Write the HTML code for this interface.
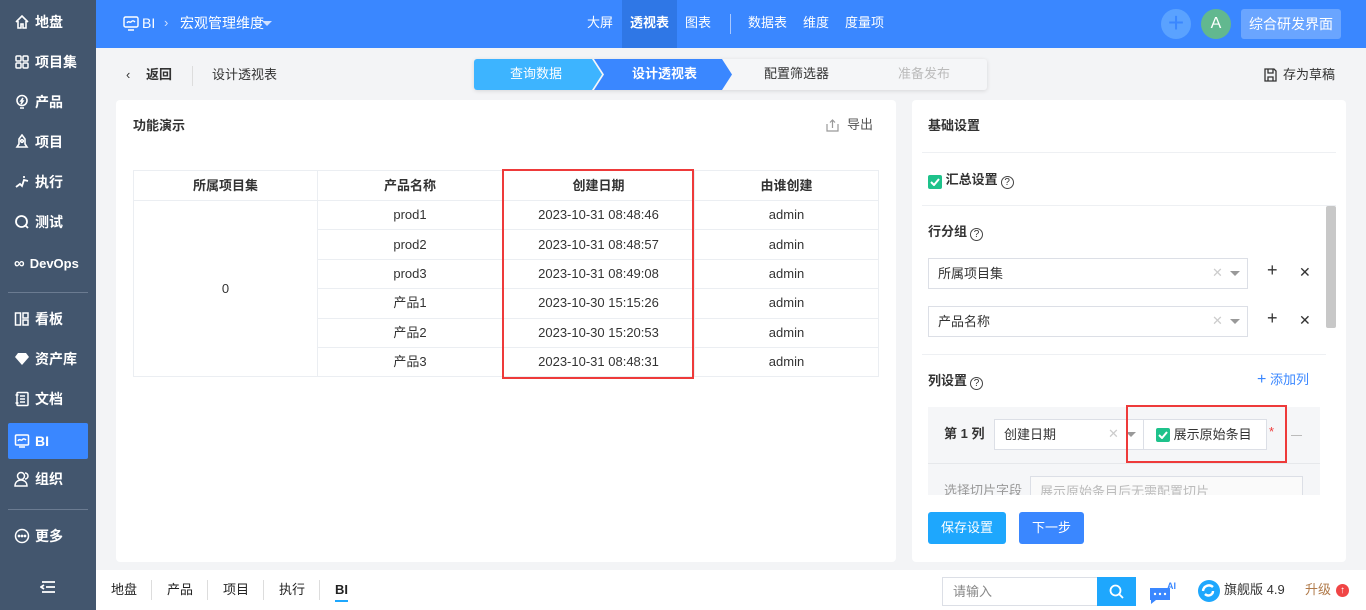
<!DOCTYPE html>
<html><head><meta charset="utf-8"><style>
*{margin:0;padding:0;box-sizing:border-box}
body{width:1366px;height:610px;overflow:hidden;background:#f3f4f6;font-family:"Liberation Sans","Noto Sans CJK SC",sans-serif;font-size:13px;color:#333;position:relative;line-height:16px}
.abs{position:absolute}
.side{left:0;top:0;width:96px;height:610px;background:#43566e;color:#fff}
.si{position:absolute;left:8px;width:80px;height:36px;display:flex;align-items:center;padding-left:6px;font-size:14px;font-weight:bold;gap:5px}
.si svg{width:16px;height:16px;flex:none}
.hdr{left:96px;top:0;width:1270px;height:48px;background:#3a87ff;color:#fff}
.card{background:#fff;border-radius:4px}
table{border-collapse:collapse;position:absolute;left:133px;top:170px;width:746px;font-size:13px}
td,th{border:1px solid #ebeef2;text-align:center;height:29.4px;color:#333}
th{font-weight:bold;height:30px}
.sel{position:absolute;border:1px solid #dcdfe6;background:#fff;height:31px;display:flex;align-items:center;padding-left:9px;font-size:13px}
.x{position:absolute;color:#ccc;font-size:13px}
.tri{position:absolute;width:0;height:0;border-left:5px solid transparent;border-right:5px solid transparent;border-top:5px solid #999}
.chk{width:14px;height:14px;background:#1ec28b;border-radius:2px;display:inline-flex;align-items:center;justify-content:center;vertical-align:-2px}
.q{display:inline-block;width:13px;height:13px;border:1.3px solid #444;border-radius:50%;font-size:10px;line-height:11px;text-align:center;font-weight:normal;vertical-align:-1px;margin-left:3px}
.btn{position:absolute;color:#fff;border-radius:3px;display:flex;align-items:center;justify-content:center;font-size:13px}
</style></head><body>
<div class="abs side">
 <div class="si" style="top:4px"><svg viewBox="0 0 16 16" fill="none" stroke="#fff" stroke-width="1.6"><path d="M2 8L8 2l6 6M4 7v7h3v-4h2v4h3V7"/></svg>地盘</div>
 <div class="si" style="top:44px"><svg viewBox="0 0 16 16" fill="none" stroke="#fff" stroke-width="1.5"><rect x="2" y="2" width="5" height="5" rx="1"/><rect x="9" y="2" width="5" height="5" rx="1"/><rect x="2" y="9" width="5" height="5" rx="1"/><rect x="9" y="9" width="5" height="5" rx="1"/></svg>项目集</div>
 <div class="si" style="top:84px"><svg viewBox="0 0 16 16" fill="none" stroke="#fff" stroke-width="1.6"><circle cx="8" cy="6.5" r="5"/><path d="M6 14h4M9 4L7 7h2l-2 3"/></svg>产品</div>
 <div class="si" style="top:124px"><svg viewBox="0 0 16 16" fill="none" stroke="#fff" stroke-width="1.6"><path d="M8 1l3 4v5l2 3H3l2-3V5z"/><circle cx="8" cy="7" r="1.3"/></svg>项目</div>
 <div class="si" style="top:164px"><svg viewBox="0 0 16 16" fill="none" stroke="#fff" stroke-width="1.8"><path d="M2 13l4-3 2 2 2-6 4 1M9 3h2"/></svg>执行</div>
 <div class="si" style="top:204px"><svg viewBox="0 0 16 16" fill="none" stroke="#fff" stroke-width="1.8"><circle cx="7.5" cy="7.5" r="5.5"/><path d="M11 11l3 3"/></svg>测试</div>
 <div class="si" style="top:246px;font-size:13px"><span style="font-size:15px">∞</span>DevOps</div>
 <div style="position:absolute;left:8px;top:292px;width:80px;border-top:1px solid #6b7b91"></div>
 <div class="si" style="top:301px"><svg viewBox="0 0 16 16" fill="none" stroke="#fff" stroke-width="1.5"><rect x="1.5" y="2" width="5" height="12"/><rect x="9" y="2" width="5" height="5"/><rect x="9" y="9" width="5" height="5"/></svg>看板</div>
 <div class="si" style="top:341px"><svg viewBox="0 0 16 16" fill="#fff"><path d="M4 2h8l3 4-7 8-7-8z"/></svg>资产库</div>
 <div class="si" style="top:381px"><svg viewBox="0 0 16 16" fill="none" stroke="#fff" stroke-width="1.5"><rect x="3" y="1.5" width="11" height="13" rx="1"/><path d="M6 5h5M6 8h5M6 11h5M1.5 4h3M1.5 12h3"/></svg>文档</div>
 <div class="si" style="top:423px;background:#3a87ff;border-radius:2px"><svg viewBox="0 0 16 16" fill="none" stroke="#fff" stroke-width="1.5"><rect x="1.5" y="2" width="13" height="10" rx="1"/><path d="M4 8c1.5-3 3 0 4-1s2-2 4 0M5 14h6"/></svg>BI</div>
 <div class="si" style="top:461px"><svg viewBox="0 0 16 16" fill="none" stroke="#fff" stroke-width="1.5"><circle cx="7" cy="5" r="3.5"/><path d="M1 15c0-4 3-6 6-6s6 2 6 6zM11 2a3 3 0 010 6"/></svg>组织</div>
 <div style="position:absolute;left:8px;top:509px;width:80px;border-top:1px solid #6b7b91"></div>
 <div class="si" style="top:518px"><svg viewBox="0 0 16 16" fill="none" stroke="#fff" stroke-width="1.5"><circle cx="8" cy="8" r="6.5"/><circle cx="5" cy="8" r=".6" fill="#fff"/><circle cx="8" cy="8" r=".6" fill="#fff"/><circle cx="11" cy="8" r=".6" fill="#fff"/></svg>更多</div>
 <svg class="abs" style="left:40px;top:580px" width="16" height="14" viewBox="0 0 16 14" fill="none" stroke="#fff" stroke-width="1.8"><path d="M2 2h13M6 7h9M2 12h13M4 5L1 7l3 2"/></svg>
</div>
<div class="abs hdr">
 <svg class="abs" style="left:27px;top:16px" width="16" height="15" viewBox="0 0 16 15" fill="none" stroke="#fff" stroke-width="1.4"><rect x="1" y="1" width="14" height="10" rx="1.5"/><path d="M4 7c1.5-3 3 0 4-1s2-2 4 0M5 14h6"/></svg>
 <span class="abs" style="left:46px;top:15px;font-size:14px">BI</span>
 <span class="abs" style="left:68px;top:15px;color:#cfe0ff">›</span>
 <span class="abs" style="left:84px;top:15px;font-size:14px">宏观管理维度</span>
 <div class="tri" style="left:166px;top:21px;border-top-color:#cfe0ff"></div>
 <div class="abs" style="left:526px;top:0;width:55px;height:48px;background:#2f77e6"></div>
 <span class="abs" style="left:491px;top:15px">大屏</span>
 <span class="abs" style="left:534px;top:15px;font-weight:bold">透视表</span>
 <span class="abs" style="left:589px;top:15px">图表</span>
 <div class="abs" style="left:634px;top:14px;height:20px;border-left:1px solid #a9c8ff"></div>
 <span class="abs" style="left:652px;top:15px">数据表</span>
 <span class="abs" style="left:707px;top:15px">维度</span>
 <span class="abs" style="left:749px;top:15px">度量项</span>
 <div class="abs" style="left:1065px;top:9px;width:30px;height:30px;border-radius:50%;background:#5aa2ff;color:#3a87ff;font-size:28px;line-height:28px;text-align:center">+</div>
 <div class="abs" style="left:1105px;top:9px;width:30px;height:30px;border-radius:50%;background:#62b88f;text-align:center;line-height:30px;font-size:16px">A</div>
 <div class="abs" style="left:1145px;top:9px;width:100px;height:30px;border-radius:3px;background:#6aa5ff;text-align:center;line-height:30px;font-size:14px">综合研发界面</div>
</div>
<span class="abs" style="left:126px;top:67px">‹</span>
<span class="abs" style="left:146px;top:67px;font-weight:bold">返回</span>
<div class="abs" style="left:192px;top:66px;height:20px;border-left:1px solid #ddd"></div>
<span class="abs" style="left:212px;top:67px">设计透视表</span>
<div class="abs" style="left:474px;top:59px;width:513px;height:31px;background:#f5f6f8;border-radius:3px;box-shadow:0 1px 4px rgba(0,0,0,.12)"></div>
<svg class="abs" style="left:474px;top:59px" width="260" height="31"><path d="M3 0H118l10 15.5L118 31H3a3 3 0 01-3-3V3a3 3 0 013-3z" fill="#3db4ff"/><path d="M120 0H248l10 15.5L248 31H120l10-15.5z" fill="#3a87ff"/></svg>
<span class="abs" style="left:510px;top:66px;color:#fff">查询数据</span>
<span class="abs" style="left:632px;top:66px;color:#fff;font-weight:bold">设计透视表</span>
<span class="abs" style="left:764px;top:66px">配置筛选器</span>
<span class="abs" style="left:898px;top:66px;color:#bbb">准备发布</span>
<svg class="abs" style="left:1264px;top:68px" width="13" height="14" viewBox="0 0 13 14" fill="none" stroke="#333" stroke-width="1.3"><path d="M1 1h9l2 2v10H1zM4 1v4h5V1M4 13V9h5v4"/></svg>
<span class="abs" style="left:1283px;top:67px">存为草稿</span>

<div class="abs card" style="left:116px;top:100px;width:780px;height:462px">
 <span class="abs" style="left:17px;top:18px;font-weight:bold">功能演示</span>
 <svg class="abs" style="left:710px;top:19px" width="13" height="13" viewBox="0 0 13 13" fill="none" stroke="#999" stroke-width="1.2"><path d="M1 5v7h11V5M6.5 1v8M4 3.5l2.5-2.5 2.5 2.5"/></svg>
 <span class="abs" style="left:731px;top:17px;color:#555">导出</span>
</div>
<table>
<tr><th style="width:184px">所属项目集</th><th style="width:185px">产品名称</th><th style="width:192px">创建日期</th><th>由谁创建</th></tr>
<tr><td rowspan="6">0</td><td>prod1</td><td>2023-10-31 08:48:46</td><td>admin</td></tr>
<tr><td>prod2</td><td>2023-10-31 08:48:57</td><td>admin</td></tr>
<tr><td>prod3</td><td>2023-10-31 08:49:08</td><td>admin</td></tr>
<tr><td>产品1</td><td>2023-10-30 15:15:26</td><td>admin</td></tr>
<tr><td>产品2</td><td>2023-10-30 15:20:53</td><td>admin</td></tr>
<tr><td>产品3</td><td>2023-10-31 08:48:31</td><td>admin</td></tr>
</table>
<div class="abs" style="left:502px;top:169px;width:192px;height:210px;border:2px solid #ee3a3a"></div>

<div class="abs card" style="left:912px;top:100px;width:434px;height:462px"></div>
<span class="abs" style="left:928px;top:118px;font-weight:bold">基础设置</span>
<div class="abs" style="left:922px;top:152px;width:414px;border-top:1px solid #eef0f3"></div>
<span class="abs" style="left:928px;top:172px;font-weight:bold"><span class="chk"><svg width="10" height="8"><path d="M1 4l3 3 5-6" stroke="#fff" stroke-width="2" fill="none"/></svg></span> 汇总设置<span class="q">?</span></span>
<div class="abs" style="left:922px;top:205px;width:414px;border-top:1px solid #eef0f3"></div>
<span class="abs" style="left:928px;top:224px;font-weight:bold">行分组<span class="q">?</span></span>
<div class="sel" style="left:928px;top:258px;width:320px">所属项目集</div>
<span class="x" style="left:1212px;top:265px">✕</span><div class="tri" style="left:1230px;top:271px"></div>
<span class="abs" style="left:1267px;top:262px;font-size:18px;color:#333">+</span><span class="abs" style="left:1299px;top:264px;font-size:14px">✕</span>
<div class="sel" style="left:928px;top:306px;width:320px">产品名称</div>
<span class="x" style="left:1212px;top:313px">✕</span><div class="tri" style="left:1230px;top:319px"></div>
<span class="abs" style="left:1267px;top:310px;font-size:18px">+</span><span class="abs" style="left:1299px;top:312px;font-size:14px">✕</span>
<div class="abs" style="left:1326px;top:206px;width:10px;height:122px;background:#c8c8c8;border-radius:2px"></div>
<div class="abs" style="left:922px;top:354px;width:404px;border-top:1px solid #eef0f3"></div>
<span class="abs" style="left:928px;top:373px;font-weight:bold">列设置<span class="q">?</span></span>
<span class="abs" style="left:1257px;top:372px;color:#3a87ff"><span style="font-size:16px">+</span> 添加列</span>
<div class="abs" style="left:928px;top:407px;width:392px;height:88px;background:#f5f6f8;overflow:hidden">
 <div class="abs" style="left:0;top:56px;width:392px;border-top:1px solid #e6e8eb"></div>
 <div class="sel" style="left:102px;top:69px;width:273px;color:#bbb;background:#fafafa">展示原始条目后无需配置切片</div>
 <span class="abs" style="left:16px;top:76px;color:#999">选择切片字段</span>
</div>
<span class="abs" style="left:944px;top:426px;font-weight:bold">第 1 列</span>
<div class="sel" style="left:994px;top:419px;width:150px">创建日期</div>
<span class="x" style="left:1108px;top:426px">✕</span><div class="tri" style="left:1126px;top:432px"></div>
<div class="sel" style="left:1143px;top:419px;width:124px;padding-left:12px"><span class="chk"><svg width="10" height="8"><path d="M1 4l3 3 5-6" stroke="#fff" stroke-width="2" fill="none"/></svg></span>&nbsp;展示原始条目</div>
<span class="abs" style="left:1269px;top:424px;color:#ee3a3a">*</span>
<div class="abs" style="left:1291px;top:435px;width:11px;border-top:1px solid #bbb"></div>
<div class="abs" style="left:1126px;top:405px;width:161px;height:58px;border:2px solid #ee3a3a"></div>
<div class="btn" style="left:928px;top:512px;width:78px;height:32px;background:#1ea7fd">保存设置</div>
<div class="btn" style="left:1019px;top:512px;width:65px;height:32px;background:#3a87ff">下一步</div>

<div class="abs" style="left:96px;top:570px;width:1270px;height:40px;background:#fff"></div>
<span class="abs" style="left:111px;top:582px;color:#222">地盘</span>
<div class="abs" style="left:151px;top:580px;height:20px;border-left:1px solid #ddd"></div>
<span class="abs" style="left:167px;top:582px;color:#222">产品</span>
<div class="abs" style="left:207px;top:580px;height:20px;border-left:1px solid #ddd"></div>
<span class="abs" style="left:223px;top:582px;color:#222">项目</span>
<div class="abs" style="left:263px;top:580px;height:20px;border-left:1px solid #ddd"></div>
<span class="abs" style="left:279px;top:582px;color:#222">执行</span>
<div class="abs" style="left:319px;top:580px;height:20px;border-left:1px solid #ddd"></div>
<span class="abs" style="left:335px;top:582px;color:#222;font-weight:bold">BI</span>
<div class="abs" style="left:335px;top:600px;width:13px;height:2px;background:#1ea7fd"></div>
<div class="abs" style="left:942px;top:577px;width:156px;height:29px;border:1px solid #dcdfe6;padding:6px 10px;color:#888">请输入</div>
<div class="abs" style="left:1097px;top:577px;width:39px;height:29px;background:#1ea7fd"><svg style="margin:7px 12px" width="15" height="15" fill="none" stroke="#fff" stroke-width="1.8"><circle cx="6.5" cy="6.5" r="5"/><path d="M10 10l4 4"/></svg></div>
<svg class="abs" style="left:1148px;top:580px" width="30" height="26"><path d="M2 8h20v12H8l-5 4v-4H2z" fill="#3a87ff"/><circle cx="7" cy="14" r="1.2" fill="#fff"/><circle cx="12" cy="14" r="1.2" fill="#fff"/><circle cx="17" cy="14" r="1.2" fill="#fff"/><text x="19" y="9" font-size="9" fill="#3a87ff" font-weight="bold" font-family="Liberation Sans">AI</text></svg>
<svg class="abs" style="left:1197px;top:579px" width="24" height="24"><circle cx="12" cy="12" r="11" fill="#1ea7fd"/><path d="M6 12a6 6 0 0110-4M8 15c3 3 8 1 8-3" stroke="#fff" stroke-width="2.4" fill="none"/></svg>
<span class="abs" style="left:1224px;top:582px;color:#333">旗舰版 4.9</span>
<span class="abs" style="left:1305px;top:582px;color:#b07a4a">升级</span>
<div class="abs" style="left:1336px;top:584px;width:13px;height:13px;border-radius:50%;background:#f04545;color:#fff;font-size:10px;text-align:center;line-height:13px;font-weight:bold">↑</div>
</body></html>
